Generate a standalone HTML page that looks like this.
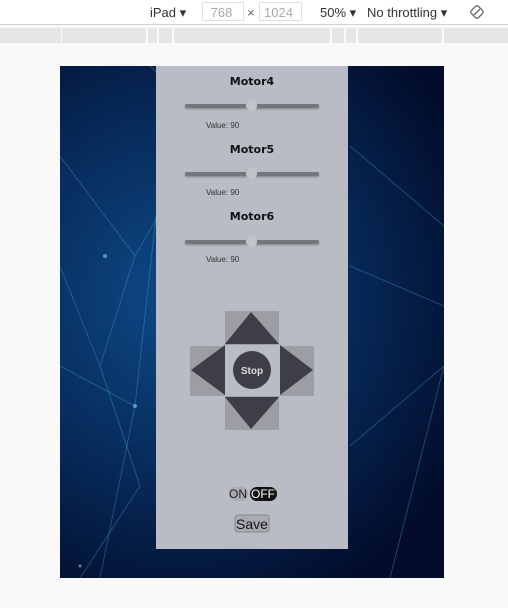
<!DOCTYPE html>
<html><head><style>
*{margin:0;padding:0;box-sizing:border-box}
body{width:508px;height:608px;background:#f9f9f9;font-family:"Liberation Sans",sans-serif;position:relative;overflow:hidden}
.tb{position:absolute;top:0;left:0;width:508px;height:25px;background:#fff;border-bottom:1px solid #d0d0d0;font-size:13px;color:#333}
.tb span{position:absolute;top:5px}
.box{position:absolute;top:2px;height:19px;border:1px solid #e0e0e0;color:#aaa;font-size:13px;padding:2px 4px}
.row{position:absolute;top:28px;height:15px;background:#e6e6e6}
.frame{position:absolute;left:60px;top:66px;width:384px;height:512px;background:radial-gradient(ellipse at 30% 45%,#0e4a86,#072a5a 45%,#020c2a 85%)}
.panel{position:absolute;left:156px;top:66px;width:192px;height:483px;background:#b9bcc4}
.m{position:absolute;width:192px;text-align:center;font-family:"Comic Sans MS","DejaVu Sans",sans-serif;font-weight:bold;font-size:11px;color:#111}
.sl{position:absolute;left:185px;width:134px;height:4px;background:#75777d;border-radius:2px;box-shadow:0 1px 2px rgba(0,0,0,.3)}
.kn{position:absolute;width:11px;height:11px;border-radius:50%;background:#c2c4ca;left:246px}
.v{position:absolute;left:206px;font-size:8px;color:#333}
</style></head><body>
<div class="tb">
<span style="left:150px">iPad ▾</span>
<div class="box" style="left:202px;width:42px">&nbsp;768</div>
<span style="left:247px;color:#666">×</span>
<div class="box" style="left:259px;width:43px">1024</div>
<span style="left:320px">50% ▾</span>
<span style="left:367px">No throttling ▾</span>
<svg style="position:absolute;left:469px;top:4px" width="16" height="16" viewBox="0 0 16 16"><g fill="none" stroke="#666" stroke-width="1.3"><rect x="3" y="3" width="10" height="10" rx="2" transform="rotate(-45 8 8)"/><path d="M5 11L11 5"/></g></svg>
</div>
<div class="row" style="left:0;width:61px"></div>
<div class="row" style="left:62px;width:84px"></div>
<div class="row" style="left:148px;width:9px"></div>
<div class="row" style="left:159px;width:13px"></div>
<div class="row" style="left:174px;width:156px"></div>
<div class="row" style="left:332px;width:12px"></div>
<div class="row" style="left:346px;width:10px"></div>
<div class="row" style="left:358px;width:84px"></div>
<div class="row" style="left:444px;width:64px"></div>
<div class="frame"></div>
<svg style="position:absolute;left:60px;top:66px" width="384" height="512"><g stroke="#4aa8d8" stroke-opacity=".35" stroke-width="1" fill="none">
<path d="M0 90L75 190L40 300L80 420L20 512"/><path d="M75 190L150 60L90 0"/><path d="M0 300L75 340L96 150"/><path d="M75 340L40 512"/><path d="M0 200L40 300"/><path d="M290 80L384 160"/><path d="M290 380L384 300L330 512"/><path d="M290 200L384 240"/>
</g><g fill="#7fd4ff" fill-opacity=".6"><circle cx="75" cy="340" r="2"/><circle cx="45" cy="190" r="2"/><circle cx="20" cy="500" r="1.5"/></g></svg>
<div class="panel"></div>
<div class="m" style="left:156px;top:75px">Motor4</div>
<div class="sl" style="top:104px"></div><div class="kn" style="top:100px"></div>
<div class="v" style="top:121px">Value: 90</div>
<div class="m" style="left:156px;top:143px">Motor5</div>
<div class="sl" style="top:172px"></div><div class="kn" style="top:168px"></div>
<div class="v" style="top:188px">Value: 90</div>
<div class="m" style="left:156px;top:210px">Motor6</div>
<div class="sl" style="top:240px"></div><div class="kn" style="top:236px"></div>
<div class="v" style="top:255px">Value: 90</div>
<svg style="position:absolute;left:0;top:0" width="508" height="608">
<g fill="#9c9ea4"><rect x="225" y="311" width="54" height="34"/><rect x="190" y="346" width="35" height="50"/><rect x="280" y="346" width="34" height="50"/><rect x="225" y="396" width="54" height="34"/></g>
<g fill="#3e3f46"><path d="M251 312L279 344H225Z"/><path d="M191 370L225 345V395Z"/><path d="M313 370L280 345V395Z"/><path d="M251 429L279 397H225Z"/></g>
<circle cx="252" cy="370" r="19" fill="#3e3f46"/>
<text x="252" y="374" text-anchor="middle" font-family="Liberation Sans" font-weight="bold" font-size="10" fill="#ddd">Stop</text>
<rect x="229" y="487" width="19" height="14" rx="6" fill="#a9abb1"/>
<text x="238" y="498" text-anchor="middle" font-family="Liberation Sans" font-size="12" fill="#222">ON</text>
<rect x="250" y="487" width="27" height="14" rx="7" fill="#111"/>
<text x="263" y="498" text-anchor="middle" font-family="Liberation Sans" font-size="12" fill="#fff">OFF</text>
<rect x="235" y="515" width="34" height="17" rx="3" fill="#a9abb1" stroke="#888"/>
<text x="252" y="529" text-anchor="middle" font-family="Liberation Sans" font-size="14" fill="#111">Save</text>
</svg>
</body></html>
